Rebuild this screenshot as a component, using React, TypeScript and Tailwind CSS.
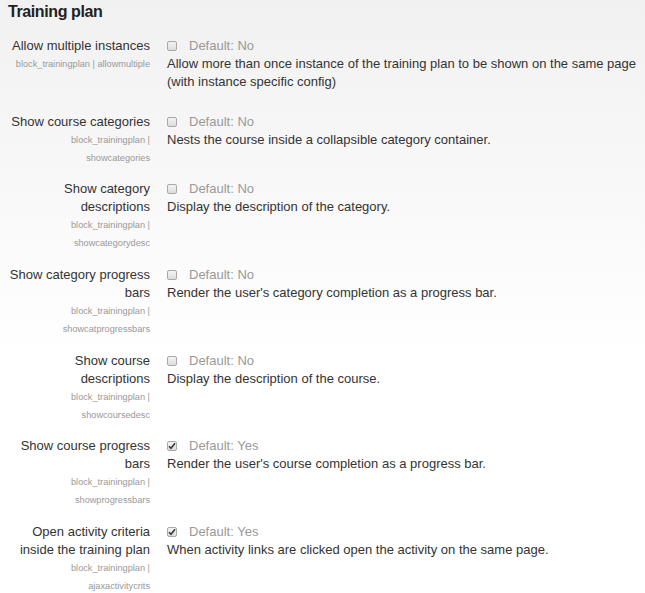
import React from "react";

interface Setting {
  label: string;
  name: string;
  checked: boolean;
  description: string;
}

const settings: Setting[] = [
  {
    label: "Allow multiple instances",
    name: "allowmultiple",
    checked: false,
    description:
      "Allow more than once instance of the training plan to be shown on the same page (with instance specific config)",
  },
  {
    label: "Show course categories",
    name: "showcategories",
    checked: false,
    description: "Nests the course inside a collapsible category container.",
  },
  {
    label: "Show category descriptions",
    name: "showcategorydesc",
    checked: false,
    description: "Display the description of the category.",
  },
  {
    label: "Show category progress bars",
    name: "showcatprogressbars",
    checked: false,
    description: "Render the user's category completion as a progress bar.",
  },
  {
    label: "Show course descriptions",
    name: "showcoursedesc",
    checked: false,
    description: "Display the description of the course.",
  },
  {
    label: "Show course progress bars",
    name: "showprogressbars",
    checked: true,
    description: "Render the user's course completion as a progress bar.",
  },
  {
    label: "Open activity criteria inside the training plan",
    name: "ajaxactivitycrits",
    checked: true,
    description: "When activity links are clicked open the activity on the same page.",
  },
];

function Checkbox({ checked }: { checked: boolean }) {
  return (
    <span className="inline-flex items-center justify-center w-[10px] h-[10px] rounded-[2px] border border-[#a9a9a9] bg-[linear-gradient(to_bottom,#f4f4f4,#dcdcdc)] shrink-0">
      {checked && (
        <svg width="8" height="8" viewBox="0 0 8 8">
          <path d="M1 4.2 L3 6.3 L7 1.2" fill="none" stroke="#3a3a3a" strokeWidth="1.6" />
        </svg>
      )}
    </span>
  );
}

function SettingRow({ s }: { s: Setting }) {
  return (
    <div className="flex pb-[13.67px]">
      <div className="w-[142px] ml-2 text-right shrink-0">
        <div className="text-[#333333]">{s.label}</div>
        <div className="text-[9.2px] text-[#999999]">
          block_trainingplan | {s.name}
        </div>
      </div>
      <div className="ml-[17px] flex-1 mb-[8.33px]">
        <div className="flex items-center h-[18px]">
          <Checkbox checked={s.checked} />
          <span className="ml-[12px] text-[#999999]">
            Default: {s.checked ? "Yes" : "No"}
          </span>
        </div>
        <div className="text-[#333333] pr-1">{s.description}</div>
      </div>
    </div>
  );
}

export default function App() {
  return (
    <div className="min-h-[593px] bg-[linear-gradient(to_bottom,#f1f1f1,#ffffff_360px)] font-['Liberation_Sans',Arial,sans-serif] text-[13px] leading-[18px]">
      <h3 className="pl-2 pt-[2px] mb-[14.7px] text-[16px] leading-[20px] font-bold tracking-[-0.4px] text-[#222222]">
        Training plan
      </h3>
      {settings.map((s) => (
        <SettingRow key={s.name} s={s} />
      ))}
    </div>
  );
}
